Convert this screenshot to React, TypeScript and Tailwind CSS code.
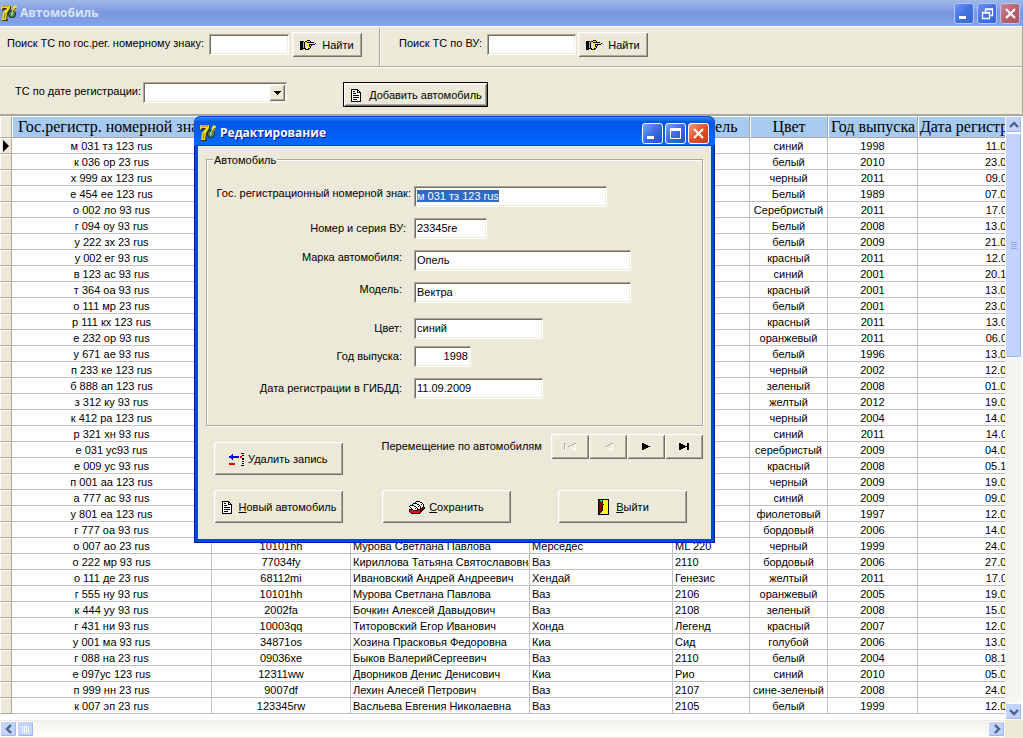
import { useEffect, useRef } from "react";
import type { ReactNode } from "react";
import clsx from "clsx";

interface Car {
  plate: string;
  license?: string;
  owner?: string;
  brand?: string;
  model?: string;
  color: string;
  year: number;
  date: string;
}

const cars: Car[] = [
  { plate: "м 031 тз 123 rus", color: "синий", year: 1998, date: "11.09.2009" },
  { plate: "к 036 ор 23 rus", color: "белый", year: 2010, date: "23.05.2010" },
  { plate: "х 999 ах 123 rus", color: "черный", year: 2011, date: "09.05.2011" },
  { plate: "е 454 ее 123 rus", color: "Белый", year: 1989, date: "07.05.2009" },
  { plate: "о 002 ло 93 rus", color: "Серебристый", year: 2011, date: "17.05.2011" },
  { plate: "г 094 оу 93 rus", color: "Белый", year: 2008, date: "13.05.2008" },
  { plate: "у 222 зх 23 rus", color: "белый", year: 2009, date: "21.05.2009" },
  { plate: "у 002 ег 93 rus", color: "красный", year: 2011, date: "12.05.2011" },
  { plate: "в 123 ас 93 rus", color: "синий", year: 2001, date: "20.10.2009" },
  { plate: "т 364 оа 93 rus", color: "красный", year: 2001, date: "13.05.2009" },
  { plate: "о 111 мр 23 rus", color: "белый", year: 2001, date: "23.05.2009" },
  { plate: "р 111 кх 123 rus", color: "красный", year: 2011, date: "13.05.2011" },
  { plate: "е 232 ор 93 rus", color: "оранжевый", year: 2011, date: "06.05.2011" },
  { plate: "у 671 ае 93 rus", color: "белый", year: 1996, date: "13.05.2009" },
  { plate: "п 233 ке 123 rus", color: "черный", year: 2002, date: "12.05.2009" },
  { plate: "б 888 ап 123 rus", color: "зеленый", year: 2008, date: "01.05.2009" },
  { plate: "з 312 ку 93 rus", color: "желтый", year: 2012, date: "19.05.2012" },
  { plate: "к 412 ра 123 rus", color: "черный", year: 2004, date: "14.05.2009" },
  { plate: "р 321 хн 93 rus", color: "синий", year: 2011, date: "14.05.2011" },
  { plate: "е 031 ус93 rus", color: "серебристый", year: 2009, date: "04.05.2009" },
  { plate: "е 009 ус 93 rus", color: "красный", year: 2008, date: "05.10.2009" },
  { plate: "п 001 аа 123 rus", color: "черный", year: 2009, date: "19.05.2009" },
  { plate: "а 777 ас 93 rus", color: "синий", year: 2009, date: "09.05.2009" },
  { plate: "у 801 еа 123 rus", color: "фиолетовый", year: 1997, date: "12.05.2009" },
  { plate: "г 777 оа 93 rus", color: "бордовый", year: 2006, date: "14.05.2009" },
  { plate: "о 007 ао 23 rus", license: "10101hh", owner: "Мурова Светлана Павлова", brand: "Мерседес", model: "ML 220", color: "черный", year: 1999, date: "24.05.2009" },
  { plate: "о 222 мр 93 rus", license: "77034fy", owner: "Кириллова Татьяна Святославовна", brand: "Ваз", model: "2110", color: "бордовый", year: 2006, date: "27.05.2009" },
  { plate: "о 111 де 23 rus", license: "68112mi", owner: "Ивановский Андрей Андреевич", brand: "Хендай", model: "Генезис", color: "желтый", year: 2011, date: "17.05.2011" },
  { plate: "г 555 ну 93 rus", license: "10101hh", owner: "Мурова Светлана Павлова", brand: "Ваз", model: "2106", color: "оранжевый", year: 2005, date: "19.05.2009" },
  { plate: "к 444 уу 93 rus", license: "2002fa", owner: "Бочкин Алексей Давыдович", brand: "Ваз", model: "2108", color: "зеленый", year: 2008, date: "15.05.2009" },
  { plate: "г 431 ни 93 rus", license: "10003qq", owner: "Титоровский Егор Иванович", brand: "Хонда", model: "Легенд", color: "красный", year: 2007, date: "12.05.2009" },
  { plate: "у 001 ма 93 rus", license: "34871os", owner: "Хозина Прасковья Федоровна", brand: "Киа", model: "Сид", color: "голубой", year: 2006, date: "13.05.2009" },
  { plate: "г 088 на 23 rus", license: "09036xe", owner: "Быков ВалерийСергеевич", brand: "Ваз", model: "2110", color: "белый", year: 2004, date: "08.10.2009" },
  { plate: "е 097ус 123 rus", license: "12311ww", owner: "Дворников Денис Денисович", brand: "Киа", model: "Рио", color: "синий", year: 2010, date: "05.05.2010" },
  { plate: "п 999 нн 23 rus", license: "9007df", owner: "Лехин Алесей Петрович", brand: "Ваз", model: "2107", color: "сине-зеленый", year: 2008, date: "24.05.2009" },
  { plate: "к 007 эп 23 rus", license: "123345rw", owner: "Васльева Евгения Николаевна", brand: "Ваз", model: "2105", color: "белый", year: 1999, date: "12.05.2009" },
];

const sunken =
  "bg-white shadow-[inset_1px_1px_#aca899,inset_-1px_-1px_#fff,inset_2px_2px_#716f64,inset_-2px_-2px_#f1efe2]";
const raised =
  "bg-[#ece9d8] shadow-[inset_1px_1px_#fff,inset_-1px_-1px_#716f64,inset_2px_2px_#f1efe2,inset_-2px_-2px_#aca899]";
const scrollButton =
  "flex items-center justify-center rounded-[2px] border border-white bg-[#c3d3fd] shadow-[inset_-1px_-1px_#9db5ee]";

const palette: Record<string, string> = {
  k: "#000000",
  w: "#ffffff",
  y: "#ffff00",
  c: "#00ffff",
  r: "#ff0000",
  m: "#800000",
  b: "#0000ff",
  g: "#aca899",
};

function PixelIcon({ rows }: { rows: string[] }) {
  const width = rows[0].length;
  return (
    <svg width={width} height={rows.length} shapeRendering="crispEdges" className="shrink-0" aria-hidden="true">
      {rows.map((row, y) =>
        row.split("").map((ch, x) =>
          palette[ch] ? <rect key={`${x}-${y}`} x={x} y={y} width={1} height={1} fill={palette[ch]} /> : null
        )
      )}
    </svg>
  );
}

const handIcon = [
  ".......kkk......",
  "kkkk.kkyyyk.....",
  "kkkckyykkkkkkk..",
  "kkkckyyyyyyyyyyk",
  "kkkckywyykkkkkk.",
  "kkkckyyyykyk....",
  "kkkckywyykk.....",
  "kkkckyyyyyk.....",
  "kkkkkkyykk......",
  "kkk..kkkk.......",
];

const pageIcon = [
  "kkkkkkk...",
  "kwwwwwkk..",
  "kwkkwwkwk.",
  "kwwwwwkkkk",
  "kwkkkwwwwk",
  "kwwwwwwwwk",
  "kwkkkkkkwk",
  "kwwwwwwwwk",
  "kwkkkkkkwk",
  "kwwwwwwwwk",
  "kwkkkkwwwk",
  "kwwwwwwwwk",
  "kkkkkkkkkk",
];

const deleteIcon = [
  "............kkk",
  "...b...........",
  "..bb.........kk",
  "bbbbbbbbbb.rr..",
  "bbbbbbbbbb.rr..",
  "..bb.........kk",
  "...b.........kk",
  "...............",
  ".............kk",
  "...............",
  "rrrrrr.......kk",
  "rrrrrr.........",
  "............kkk",
];

const saveIcon = [
  ".......kkkk.....",
  "......kwwwwkk...",
  "....kkkkwwwwwk..",
  "...kwwwwkkwwkwk.",
  ".kkkkwwwwwkwwwk.",
  "kwwwwkkwwkwkwwk.",
  ".kwwwwwkwwwkwkmk",
  "..kwwwkwkwwkkmmk",
  "kkkkwwwwkkkkmmk.",
  "krrrkkkkkrrkmk..",
  "krrrrrrrrrrkk...",
  ".krrrrrrrrrk....",
  "..kkkkkkkkk.....",
];

const exitIcon = [
  "kkkkkkkkkkk",
  "kmcckyyyyyk",
  "kmmckyyyyyk",
  "kmmmkyyyyyk",
  "kmmmmyyyyyk",
  "kmmmmkyyyyk",
  "kmmmkyyyyyk",
  "kmmmkyyyyyk",
  "kmmmkyyyyyk",
  "kmmmkyyyyyk",
  "kmmmkyyyyyk",
  "kmmmkyyyyyk",
  "kmmkyyyyyyk",
  "kmkyyyyyyyk",
  "kkyyyyyyyyk",
  "kkkkkkkkkkk",
];

function AppIcon() {
  return (
    <svg width="16" height="16" viewBox="0 0 16 16" className="shrink-0" aria-hidden="true">
      <path d="M1 1h9v3L7 9l-1 5 1 1v1H1l1-3 1-4 3-4H3L1 6z" fill="#3a3500" />
      <path d="M0 0h9v3L6 8l-1 7H1l1-7 4-5H2L0 5z" fill="#f0dc20" />
      <path d="M1 1h7M4 8l-1 6" stroke="#8a7a10" fill="none" />
      <circle cx="11" cy="9" r="4" fill="#24382c" />
      <circle cx="11" cy="9" r="3" fill="#3d8a55" />
      <path d="M10 7l2 1v2l-2 1z" fill="#9dbfae" />
      <path d="M11 7l1-5 2-2 2 1-1 4-3 3z" fill="#f0e020" />
      <path d="M12 7l3-4" stroke="#3a3500" />
    </svg>
  );
}

function CaptionButton({ kind, active }: { kind: "min" | "max" | "restore" | "close"; active?: boolean }) {
  const labels = { min: "Свернуть", max: "Развернуть", restore: "Восстановить", close: "Закрыть" };
  return (
    <button
      type="button"
      aria-label={labels[kind]}
      className={clsx(
        "flex h-[21px] items-center justify-center rounded-[3px] border",
        active ? "w-[21px] border-white" : "w-5 border-[#b4c8f2]",
        kind === "close" && active && "bg-linear-to-br from-[#f09a80] via-[#e0512c] to-[#c63a14]",
        kind === "close" && !active && "bg-linear-to-br from-[#c88a9c] via-[#b8606c] to-[#a85864]",
        kind !== "close" && active && "bg-linear-to-br from-[#7ea2f4] via-[#3a6be4] to-[#2450cc]",
        kind !== "close" && !active && "bg-linear-to-br from-[#6c92ee] via-[#4272e2] to-[#3a66d8]"
      )}
    >
      <svg width="15" height="15" viewBox="0 0 15 15" fill="none" stroke="#fff" aria-hidden="true">
        {kind === "min" && <path d="M2 11.5h7" strokeWidth="3" />}
        {kind === "max" && <path d="M2.500 3v9.500h10V3" />}
        {kind === "max" && <path d="M2 3.500h11" strokeWidth="3" />}
        {kind === "restore" && <path d="M5.500 6V3.500h7v6h-2M5 3h8M2.500 6.500h7v6h-7zM2 7h8" strokeWidth="1.3" />}
        {kind === "close" && <path d="M3 3l9 9M12 3l-9 9" strokeWidth="2.2" />}
      </svg>
    </button>
  );
}

function PushButton({ icon, className, children }: { icon: string[]; className?: string; children: ReactNode }) {
  return (
    <button
      type="button"
      className={clsx("flex items-center justify-center pt-px whitespace-nowrap", raised, className)}
    >
      <PixelIcon rows={icon} />
      <span>{children}</span>
    </button>
  );
}

function Chevron({ d }: { d: string }) {
  return (
    <svg width="10" height="10" viewBox="0 0 10 10" fill="none" stroke="#4d6185" strokeWidth="2.4" aria-hidden="true">
      <path d={d} />
    </svg>
  );
}

function Toolbar() {
  return (
    <header className="border-r border-[#aca899]">
      <div className="flex h-[41px] border-t border-b border-t-white border-b-[#aca899]">
        <form className="flex w-[380px] items-start border-r border-[#aca899] pl-[7px]">
          <label htmlFor="by-plate" className="w-[202px] pt-[9px] leading-[15px] whitespace-nowrap">
            Поиск ТС по гос.рег. номерному знаку:
          </label>
          <input id="by-plate" className={clsx("mt-[7px] h-[21px] w-20 px-1 outline-none", sunken)} />
          <PushButton icon={handIcon} className="mt-[5px] ml-[3px] h-[25px] w-[70px] gap-[6px]">
            Найти
          </PushButton>
        </form>
        <form className="flex items-start border-l border-white pl-[18px]">
          <label htmlFor="by-license" className="w-[88px] pt-[9px] leading-[15px] whitespace-nowrap">
            Поиск ТС по ВУ:
          </label>
          <input id="by-license" className={clsx("mt-[7px] h-[21px] w-[89px] px-1 outline-none", sunken)} />
          <PushButton icon={handIcon} className="mt-[5px] ml-[2px] h-[25px] w-[70px] gap-[6px]">
            Найти
          </PushButton>
        </form>
      </div>
      <div className="flex h-[49px] items-start border-t border-b-2 border-t-white border-b-[#aca899] pt-[14px] pl-[15px]">
        <label htmlFor="by-date" className="w-32 pt-[2px] leading-[15px] whitespace-nowrap">
          ТС по дате регистрации:
        </label>
        <div className="relative">
          <select id="by-date" className={clsx("block h-[21px] w-36 appearance-none px-1 outline-none", sunken)} />
          <span
            className={clsx(
              "pointer-events-none absolute top-[2px] right-[2px] flex h-[17px] w-4 items-center justify-center",
              raised
            )}
          >
            <PixelIcon rows={["kkkkkkk", ".kkkkk.", "..kkk..", "...k..."]} />
          </span>
        </div>
        <div className="ml-14 border border-black">
          <PushButton icon={pageIcon} className="h-[23px] w-[143px] gap-2 pl-[2px]">
            Добавить автомобиль
          </PushButton>
        </div>
      </div>
    </header>
  );
}

const headings = ["Гос.регистр. номерной знак", "Номер ВУ", "Владелец", "Марка", "Модель", "Цвет", "Год выпуска", "Дата регистрации"];

function CarTable() {
  const cell = "h-4 overflow-hidden border-r border-b border-[#c0c0c0] px-[2px] pt-px pb-0 leading-[14px] whitespace-nowrap";
  return (
    <table className="w-[1043px] table-fixed border-separate border-spacing-0 bg-white">
      <colgroup>
        <col className="w-3" />
        <col className="w-[200px]" />
        <col className="w-[139px]" />
        <col className="w-[179px]" />
        <col className="w-[143px]" />
        <col className="w-[77px]" />
        <col className="w-[78px]" />
        <col className="w-[90px]" />
        <col className="w-[125px]" />
      </colgroup>
      <thead>
        <tr>
          <td className="h-[22px] border border-t-white border-r-[#aca899] border-b-[#aca899] border-l-white bg-[#ece9d8] p-0" />
          {headings.map((name) => (
            <th
              key={name}
              scope="col"
              className="h-[22px] overflow-hidden border border-t-white border-r-[#aca899] border-b-[#aca899] border-l-white bg-[#a6caf0] p-0 font-['Liberation_Serif',serif] text-[16px] leading-5 font-normal whitespace-nowrap"
            >
              {name}
            </th>
          ))}
        </tr>
      </thead>
      <tbody>
        {cars.map((car, i) => (
          <tr key={car.plate}>
            <td className="h-4 border border-t-white border-r-[#aca899] border-b-[#aca899] border-l-white bg-[#ece9d8] p-0">
              {i === 0 && (
                <svg width="6" height="12" viewBox="0 0 6 12" className="ml-[2px] block" aria-hidden="true">
                  <path d="M0 0l6 6-6 6z" />
                </svg>
              )}
            </td>
            <td className={clsx(cell, "text-center")}>{car.plate}</td>
            <td className={clsx(cell, "text-center")}>{car.license}</td>
            <td className={cell}>{car.owner}</td>
            <td className={cell}>{car.brand}</td>
            <td className={cell}>{car.model}</td>
            <td className={clsx(cell, "text-center")}>{car.color}</td>
            <td className={clsx(cell, "text-center")}>{car.year}</td>
            <td className={clsx(cell, "text-right")}>{car.date}</td>
          </tr>
        ))}
      </tbody>
    </table>
  );
}

function VerticalScrollbar() {
  return (
    <div className="flex w-[18px] shrink-0 flex-col border-r border-white bg-[#f6f5f0]">
      <button type="button" aria-label="Вверх" className={clsx("h-[17px]", scrollButton)}>
        <Chevron d="M1 7l4-4 4 4" />
      </button>
      <div className="flex-1">
        <div className={clsx("h-[225px] flex-col gap-[1px]", scrollButton)}>
          <span className="h-px w-[6px] bg-[#8caaf0]" />
          <span className="h-px w-[6px] bg-[#8caaf0]" />
          <span className="h-px w-[6px] bg-[#8caaf0]" />
          <span className="h-px w-[6px] bg-[#8caaf0]" />
        </div>
      </div>
      <button type="button" aria-label="Вниз" className={clsx("h-[17px]", scrollButton)}>
        <Chevron d="M1 3l4 4 4-4" />
      </button>
    </div>
  );
}

function HorizontalScrollbar() {
  return (
    <div className="flex h-[18px] shrink-0 border-b border-[#ece9d8] pr-[18px]">
      <div className="flex flex-1 border-t border-[#eeede5] bg-linear-to-b from-[#f3f2ec] to-[#fefefb]">
        <button type="button" aria-label="Влево" className={clsx("w-[17px]", scrollButton)}>
          <Chevron d="M7 1L3 5l4 4" />
        </button>
        <div className="flex-1">
          <div className={clsx("h-full w-[17px] gap-[1px]", scrollButton)}>
            <span className="h-[7px] w-px bg-white" />
            <span className="h-[7px] w-px bg-white" />
            <span className="h-[7px] w-px bg-white" />
            <span className="h-[7px] w-px bg-white" />
          </div>
        </div>
        <button type="button" aria-label="Вправо" className={clsx("w-[17px]", scrollButton)}>
          <Chevron d="M3 1l4 4-4 4" />
        </button>
      </div>
    </div>
  );
}

interface Field {
  id: string;
  label: string;
  value: string;
  row: string;
  labelClass: string;
  inputClass: string;
}

const fields: Field[] = [
  { id: "plate", label: "Гос. регистрационный номерной знак:", value: "м 031 тз 123 rus", row: "items-start", labelClass: "pr-[3px]", inputClass: "w-[193px]" },
  { id: "license", label: "Номер и серия ВУ:", value: "23345re", row: "mt-[11px] items-center", labelClass: "pr-2", inputClass: "w-[73px]" },
  { id: "brand", label: "Марка автомобиля:", value: "Опель", row: "mt-[11px] items-start", labelClass: "pr-3", inputClass: "w-[217px]" },
  { id: "model", label: "Модель:", value: "Вектра", row: "mt-[11px] items-start", labelClass: "pr-3", inputClass: "w-[217px]" },
  { id: "color", label: "Цвет:", value: "синий", row: "mt-[15px] items-center", labelClass: "pr-3", inputClass: "w-[129px]" },
  { id: "year", label: "Год выпуска:", value: "1998", row: "mt-[7px] items-center", labelClass: "pr-3", inputClass: "w-[57px] text-right" },
  { id: "date", label: "Дата регистрации в ГИБДД:", value: "11.09.2009", row: "mt-[11px] items-center", labelClass: "pr-3", inputClass: "w-[129px]" },
];

function NavButton({ label, icon, disabled }: { label: string; icon: string[]; disabled?: boolean }) {
  return (
    <button
      type="button"
      aria-label={label}
      disabled={disabled}
      className={clsx("flex h-[25px] w-[38px] items-center justify-center", raised)}
    >
      <PixelIcon rows={icon} />
    </button>
  );
}

function EditDialog() {
  const plateRef = useRef<HTMLInputElement>(null);

  useEffect(() => {
    plateRef.current?.focus();
    plateRef.current?.select();
  }, []);

  return (
    <section
      role="dialog"
      aria-labelledby="dialog-title"
      className="absolute top-[116px] left-[194px] w-[521px] rounded-t-[7px] bg-[#001ea0] px-px pb-px"
    >
      <div className="-mx-px flex h-[30px] items-center gap-[2px] rounded-t-[7px] bg-linear-to-b from-[#3c96ff] from-0% via-[#0055e5] via-20% to-[#0268fe] to-90% pt-1 pr-[6px] pl-[6px] shadow-[inset_0_1px_#0a50c8,inset_0_-1px_#0043cf]">
        <AppIcon />
        <h2
          id="dialog-title"
          className="flex-1 pl-[2px] font-['Open_Sans',sans-serif] text-[12px] leading-4 font-bold text-white [text-shadow:1px_1px_#0f1089]"
        >
          Редактирование
        </h2>
        <CaptionButton kind="min" active />
        <CaptionButton kind="max" active />
        <CaptionButton kind="close" active />
      </div>
      <div className="border-x-3 border-b-3 border-[#0048e0] bg-[#ece9d8] px-2 pt-2 pb-4">
        <fieldset className="relative mt-[5px] h-[267px] border border-[#aca899] shadow-[1px_1px_#fff,inset_1px_1px_#fff]">
          <legend className="absolute -top-[7px] left-[6px] bg-[#ece9d8] px-px leading-[15px]">Автомобиль</legend>
          <div className="pt-[26px]">
            {fields.map((field) => (
              <div key={field.id} className={clsx("flex", field.row)}>
                <label htmlFor={field.id} className={clsx("w-[207px] text-right leading-[15px] whitespace-nowrap", field.labelClass)}>
                  {field.label}
                </label>
                <input
                  id={field.id}
                  ref={field.id === "plate" ? plateRef : undefined}
                  defaultValue={field.value}
                  className={clsx(
                    "h-[21px] px-[3px] pb-[2px] leading-[13px] outline-none selection:bg-[#316ac5] selection:text-white",
                    sunken,
                    field.inputClass
                  )}
                />
              </div>
            ))}
          </div>
        </fieldset>
        <div className="mt-2 flex items-start pl-2">
          <PushButton icon={deleteIcon} className="mt-2 h-[33px] w-[129px] gap-1">
            Удалить запись
          </PushButton>
          <span className="ml-[39px] w-[170px] pt-[5px] leading-[15px] whitespace-nowrap">Перемещение по автомобилям</span>
          <div className="flex">
            <NavButton
              label="Первая запись"
              disabled
              icon={["gg........gg", "gw......ggww", "gw....ggw..w", "gw..ggw....w", "gw....ww...w", "gw......ww.w", "gw........ww", "ww.........w"]}
            />
            <NavButton
              label="Предыдущая запись"
              disabled
              icon={["........gg", "......ggww", "....gg...w", "..gg.....w", "..ww.....w", "....ww...w", "......ww.w", "........ww"]}
            />
            <NavButton label="Следующая запись" icon={["kk......", "kkkk....", "kkkkkk..", "kkkkkkkk", "kkkkkk..", "kkkk....", "kk......"]} />
            <NavButton label="Последняя запись" icon={["kk......kk", "kkkk....kk", "kkkkkk..kk", "kkkkkkkkkk", "kkkkkk..kk", "kkkk....kk", "kk......kk"]} />
          </div>
        </div>
        <div className="mt-[15px] flex pl-2">
          <PushButton icon={pageIcon} className="h-[33px] w-[129px] gap-[6px] pl-[2px]">
            <u>Н</u>овый автомобиль
          </PushButton>
          <PushButton icon={saveIcon} className="ml-[39px] h-[33px] w-[129px] gap-1">
            <u>С</u>охранить
          </PushButton>
          <PushButton icon={exitIcon} className="ml-[47px] h-[33px] w-[129px] gap-[7px] pl-[2px]">
            <u>В</u>ыйти
          </PushButton>
        </div>
      </div>
    </section>
  );
}

export default function App() {
  return (
    <div className="relative flex h-screen flex-col overflow-hidden bg-[#ece9d8] font-['Liberation_Sans',Arial,sans-serif] text-[11px] text-black">
      <div className="flex h-[26px] shrink-0 items-center gap-[3px] bg-linear-to-b from-[#9db9eb] via-[#7b96e1] to-[#82a5e9] pr-[3px] pl-px">
        <AppIcon />
        <h1 className="flex-1 font-['Open_Sans',sans-serif] text-[12px] leading-4 font-bold text-[#d8e4f8]">
          Автомобиль
        </h1>
        <CaptionButton kind="min" />
        <CaptionButton kind="restore" />
        <CaptionButton kind="close" />
      </div>
      <Toolbar />
      <main className="flex min-h-0 flex-1">
        <div className="min-w-0 flex-1 overflow-hidden bg-white">
          <CarTable />
        </div>
        <VerticalScrollbar />
      </main>
      <HorizontalScrollbar />
      <EditDialog />
    </div>
  );
}
